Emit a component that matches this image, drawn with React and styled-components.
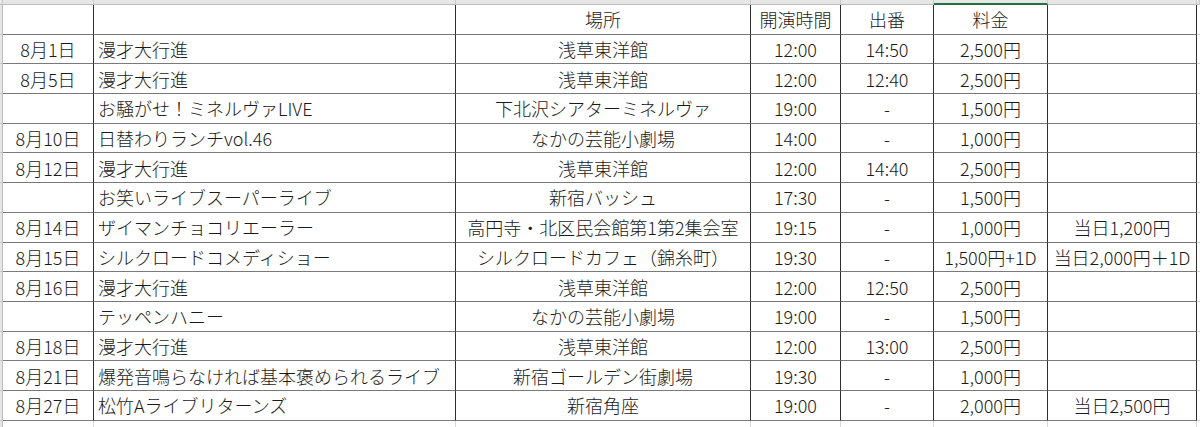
import React from "react";
import styled, { createGlobalStyle } from "styled-components";

const GlobalStyle = createGlobalStyle`
    html, body {
        margin: 0;
        padding: 0;
        background: #ffffff;
    }
    body {
        font-family: "Noto Sans CJK JP", "Noto Sans", sans-serif;
        color: #1a1a1a;
    }
`;

const COLS = "3px 91px 362px 295px 90px 93px 114px 149px 1fr";

const Sheet = styled.div`
    display: grid;
    grid-template-columns: ${COLS};
    grid-auto-rows: 29.7px;
    grid-template-rows: 5px;
    width: 1200px;
    height: 427px;
    overflow: hidden;
`;

/* 列見出しの帯（上端） */
const ColHead = styled.div`
    box-sizing: border-box;
    background: #e6e6e6;
    border-bottom: ${p => (p.$active ? "2px solid #217346" : "1px solid #bdbdbd")};
    border-right: 1px solid #cacaca;
`;

/* 行見出しの帯（左端） */
const RowHead = styled.div`
    box-sizing: border-box;
    background: #e6e6e6;
    border-right: 1px solid #bdbdbd;
    border-bottom: 1px solid #cacaca;
`;

const Cell = styled.div`
    box-sizing: border-box;
    display: flex;
    align-items: center;
    justify-content: ${p => (p.$left ? "flex-start" : "center")};
    padding: ${p => (p.$left ? "0 0 0 4px" : "0")};
    font-size: 18px;
    font-weight: 300;
    line-height: 1;
    white-space: nowrap;
    border-right: 1px solid #2e2e2e;
    border-bottom: 1px solid #7a7a7a;
`;

const Filler = styled.div`
    box-sizing: border-box;
    border-bottom: 1px solid #d4d4d4;
`;

const GhostCell = styled.div`
    box-sizing: border-box;
    border-right: 1px solid #d9d9d9;
`;

const header = ["", "", "場所", "開演時間", "出番", "料金", ""];

const rows = [
    ["8月1日", "漫才大行進", "浅草東洋館", "12:00", "14:50", "2,500円", ""],
    ["8月5日", "漫才大行進", "浅草東洋館", "12:00", "12:40", "2,500円", ""],
    ["", "お騒がせ！ミネルヴァLIVE", "下北沢シアターミネルヴァ", "19:00", "-", "1,500円", ""],
    ["8月10日", "日替わりランチvol.46", "なかの芸能小劇場", "14:00", "-", "1,000円", ""],
    ["8月12日", "漫才大行進", "浅草東洋館", "12:00", "14:40", "2,500円", ""],
    ["", "お笑いライブスーパーライブ", "新宿バッシュ", "17:30", "-", "1,500円", ""],
    ["8月14日", "ザイマンチョコリエーラー", "高円寺・北区民会館第1第2集会室", "19:15", "-", "1,000円", "当日1,200円"],
    ["8月15日", "シルクロードコメディショー", "シルクロードカフェ（錦糸町）", "19:30", "-", "1,500円+1D", "当日2,000円＋1D"],
    ["8月16日", "漫才大行進", "浅草東洋館", "12:00", "12:50", "2,500円", ""],
    ["", "テッペンハニー", "なかの芸能小劇場", "19:00", "-", "1,500円", ""],
    ["8月18日", "漫才大行進", "浅草東洋館", "12:00", "13:00", "2,500円", ""],
    ["8月21日", "爆発音鳴らなければ基本褒められるライブ", "新宿ゴールデン街劇場", "19:30", "-", "1,000円", ""],
    ["8月27日", "松竹Aライブリターンズ", "新宿角座", "19:00", "-", "2,000円", "当日2,500円"]
];

const SheetRow = function SheetRow({ cells }) {
    return <>
        <RowHead />
        {cells.map((text, i) => (
            <Cell key={i} $left={i === 1}>{text}</Cell>
        ))}
        <Filler />
    </>;
};

export default function App() {
    return <>
        <GlobalStyle />
        <Sheet>
            <ColHead />
            {header.map((_, i) => <ColHead key={i} $active={i === 5} />)}
            <ColHead />

            <SheetRow cells={header} />
            {rows.map((r, i) => <SheetRow key={i} cells={r} />)}

            <RowHead />
            {header.map((_, i) => <GhostCell key={i} />)}
            <div />
        </Sheet>
    </>;
}
